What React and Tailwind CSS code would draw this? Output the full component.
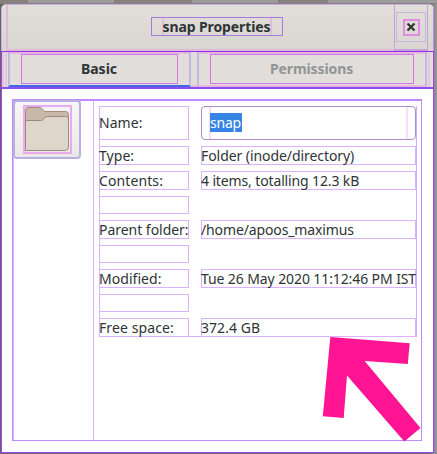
const rows = [
  { label: "Type:", value: "Folder (inode/directory)", labelSpacing: "tracking-[0.05px]", spacing: "tracking-[-0.07px]" },
  { label: "Contents:", value: "4 items, totalling 12.3 kB", labelSpacing: "tracking-[0.1px]", spacing: "tracking-[-0.13px]" },
  { blank: true },
  { label: "Parent folder:", value: "/home/apoos_maximus", labelSpacing: "tracking-[-0.03px]", spacing: "tracking-[-0.13px]" },
  { blank: true },
  { label: "Modified:", value: "Tue 26 May 2020 11:12:46 PM IST", labelSpacing: "tracking-[0.05px]", spacing: "tracking-[-0.1px]" },
  { blank: true },
  { label: "Free space:", value: "372.4 GB", labelSpacing: "tracking-[0.1px]", spacing: "tracking-[0.05px]" },
];

function Row({ row }) {
  if (row.blank) return <div className="h-[18px] w-[90px] border border-[#dcb1ff]" />;
  return (
    <div className="flex h-[19px] gap-3 leading-[17px]">
      <div className="w-[90px] shrink-0 border border-[#dcb1ff]">
        <span className={"-ml-px block whitespace-nowrap " + row.labelSpacing}>{row.label}</span>
      </div>
      <div className="w-[215px] shrink-0 border border-[#dcb1ff]">
        <span className={"-ml-px block whitespace-nowrap " + row.spacing}>{row.value}</span>
      </div>
    </div>
  );
}

function Folder() {
  return (
    <svg className="h-[45px] w-[45px]" viewBox="1.5 2 45 45">
      <path d="M2 16V5Q2 2.5 4.5 2.5H16Q18 2.5 19 4l2 2.5H42Q45 6.5 45 9.5V16Z" fill="#c9b7a9" stroke="#a08c7d" />
      <path d="M2 45.5V15.5H17Q19 15.5 20 14l2-2q1-.5 3-.5H42Q45 11.5 45 14V42Q45 45.5 41.5 45.5Z" fill="#ded5cb" stroke="#9d8979" />
    </svg>
  );
}

export default function App() {
  return (
    <div className="relative h-[454px] w-[437px] overflow-hidden bg-linear-to-r from-[#656463] from-98% to-[#999] pl-px pt-[4px] font-['Noto_Sans',sans-serif] text-[14px] text-[#2e3436]">
      <div className="absolute left-0 top-0 flex h-[4px] w-full bg-[#85817d]">
        <div className="ml-[28px] h-[3px] w-[86px] bg-[#9b9b9b]" />
        <div className="ml-[78px] h-[3px] w-[86px] bg-[#9b9b9b]" />
        <div className="ml-[50px] h-[3px] grow bg-[#9b9b9b]" />
      </div>
      <div className="relative flex h-[449px] w-[433px] flex-col overflow-hidden rounded-t-[6px] bg-white">
        <header className="flex h-[47px] shrink-0 border-l border-t border-[#c8aae5] bg-linear-to-b from-[#e2dfdb] to-[#d9d6d1] pl-[4px]">
          <div className="flex w-[388px] justify-center border-b-2 border-l-2 border-[#e3b9d9]">
            <div className="ml-[31px] mt-3 h-[19px] w-[132px] border border-[#a77ae0] px-[10px]">
              <div className="flex h-[17px] justify-center whitespace-nowrap border-x-2 border-[#e3bddd] font-bold leading-[18px] tracking-[-0.1px]">
                <span>snap Properties</span>
              </div>
            </div>
          </div>
          <div className="h-[46px] w-[34px] border border-b-2 border-t-0 border-[#c9a0df] pl-px pt-[7px]">
            <div className="flex h-[30px] w-[30px] items-center justify-center border border-[#c2b9dd]">
              <div className="flex h-[17px] w-[17px] items-center justify-center border-2 border-[#e28ae4]">
                <svg className="h-[10px] w-[10px]" viewBox="0 0 10 10">
                  <path d="M1.5 1.5 8.5 8.5M8.5 1.5 1.5 8.5" stroke="#2e3436" strokeWidth="2.2" />
                </svg>
              </div>
            </div>
          </div>
          <div className="ml-auto w-[5px] border-r border-[#b98ee3]" />
        </header>
        <div className="h-px shrink-0 bg-[#9130ea]" />

        <nav className="flex h-[37px] shrink-0 border-b-2 border-x border-[#8b4cf6] border-x-[#a643ef] bg-[#e1dedb] font-bold">
          <div className="w-[2px] bg-[#e5c4df]" />
          <div className="ml-px w-[2px] bg-[#e5c4df]" />
          <div className="ml-px flex w-[183px] flex-col border-x-2 border-b-2 border-x-[#c0b9dd] border-b-[#4268e2]">
            <div className="h-[2px] bg-[#e5b9dc]" />
            <div className="ml-[11px] mr-[11px] h-[30px] border border-[#d575e8] text-center leading-[28px]">
              <span className="-ml-px tracking-[0px]">Basic</span>
            </div>
          </div>
          <div className="w-[6px] border-b-2 border-[#e5b9dc]" />
          <div className="w-[230px] border-x-2 border-b-2 border-x-[#c0b9dd] border-b-[#e5b9dc]">
            <div className="h-[2px] bg-[#e5b9dc]" />
            <div className="ml-[11px] mr-[11px] h-[30px] border border-[#d575e8] text-center leading-[28px] text-[#929595]">
              <span className="-ml-px tracking-[-0.1px]">Permissions</span>
            </div>
          </div>
          <div className="ml-px w-[2px] bg-[#e5c4df]" />
        </nav>

        <main className="flex grow border-x border-b border-[#a344f5] pb-[11px] pl-[10px] pr-[11px] pt-[10px]">
          <div className="flex grow border border-t-2 border-[#c18aff]">
            <aside className="w-[81px] shrink-0 border-l border-r border-[#dcb1ff]">
              <div className="-ml-px -mt-px flex h-[59px] w-[68px] justify-start rounded-[4px] border-2 border-[#b9b0df] bg-linear-to-b from-[#f8f7f7] to-[#e9e8e6] pl-[8px] pt-[3px]">
                <div className="h-[49px] w-[49px] border-2 border-[#eaaaf1]">
                  <Folder />
                </div>
              </div>
            </aside>
            <section className="ml-[5px] mt-[5px] h-[231px] w-[318px] border-b border-r border-[#d7a9ff] shadow-[inset_1px_0_0_#dcb1ff]">
              <div className="flex flex-col gap-[6px]">
                <div className="flex h-[34px] gap-3">
                  <div className="w-[90px] shrink-0 border border-[#dcb1ff] leading-[32px]">
                    <span className="-ml-px block tracking-[0.05px]">Name:</span>
                  </div>
                  <div className="flex w-[215px] shrink-0 items-center rounded-[4px] border border-[#b18acb] px-[7px]">
                    <div className="flex h-[32px] grow border-x-2 border-[#fbdcfa] pt-[6px]">
                      <span className="-ml-px h-[19px] w-[32px] bg-[#3584e4] leading-[19px] tracking-[-0.2px] text-white">snap</span>
                    </div>
                  </div>
                </div>
                {rows.map((row, index) => (
                  <Row key={index} row={row} />
                ))}
              </div>
            </section>
          </div>
        </main>
      </div>
      <svg className="pointer-events-none absolute left-0 top-0 h-[454px] w-[437px]" viewBox="0 0 437 454">
        <path d="M330.3 337 409.7 343.3 407.8 364 364.7 361 420.5 428 404.3 441.5 347 375.5 343.7 418 322.8 416.3Z" fill="#ff1493" />
      </svg>
    </div>
  );
}
